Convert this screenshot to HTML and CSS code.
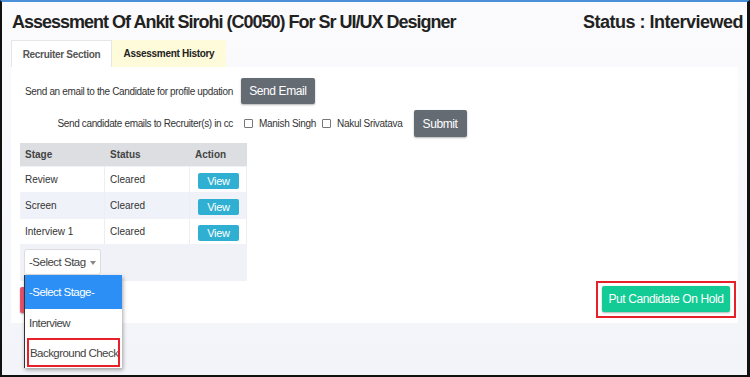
FILE: index.html
```html
<!DOCTYPE html>
<html lang="en">
<head>
  <meta charset="UTF-8" />
  <meta name="viewport" content="width=device-width, initial-scale=1" />
  <title>Assessment</title>
  <link rel="stylesheet" href="styles.css">
</head>
<body>

  <div class="frame">
    <div class="page-head">
      <h1>Assessment Of Ankit Sirohi (C0050) For Sr UI/UX Designer</h1>
      <div class="status">Status : Interviewed</div>
    </div>

    <div class="tabs">
      <div class="tab active">Recruiter Section</div>
      <div class="tab history">Assessment History</div>
    </div>

    <div class="panel">
      <div class="email-row">
        <span class="label">Send an email to the Candidate for profile updation</span>
        <button class="btn">Send Email</button>
      </div>

      <div class="cc-row">
        <span class="label cc-label">Send candidate emails to Recruiter(s) in cc</span>
        <label class="check"><span class="box"></span>Manish Singh</label>
        <label class="check"><span class="box"></span>Nakul Srivatava</label>
        <button class="btn">Submit</button>
      </div>

      <div class="stage-table">
        <div class="row head">
          <div class="cell">Stage</div>
          <div class="cell">Status</div>
          <div class="cell">Action</div>
        </div>
        <div class="row">
          <div class="cell">Review</div>
          <div class="cell">Cleared</div>
          <div class="cell"><span class="view">View</span></div>
        </div>
        <div class="row alt">
          <div class="cell">Screen</div>
          <div class="cell">Cleared</div>
          <div class="cell"><span class="view">View</span></div>
        </div>
        <div class="row">
          <div class="cell">Interview 1</div>
          <div class="cell">Cleared</div>
          <div class="cell"><span class="view">View</span></div>
        </div>
        <div class="select-row">
          <div class="select">
            <span class="select-text">-Select Stag</span>
            <span class="caret"></span>
            <ul class="dropdown">
              <li class="selected">-Select Stage-</li>
              <li>Interview</li>
              <li class="marked">Background Check</li>
            </ul>
          </div>
        </div>
      </div>

      <div class="actions">
        <button class="btn reject" aria-label="Reject"></button>
        <div class="hold-mark">
          <button class="btn hold">Put Candidate On Hold</button>
        </div>
      </div>
    </div>
  </div>

</body>
</html>
```

FILE: styles.css
```css
* {
  box-sizing: border-box;
}

body {
  margin: 0;
  font-family: "Liberation Sans", Arial, sans-serif;
  color: #333;
}

.frame {
  width: 750px;
  height: 377px;
  border-top: 2px solid #4a90d9;
  border-left: 2px solid #111;
  border-right: 3px solid #111;
  border-bottom: 2px solid #111;
  background: linear-gradient(#fbfbfd, #f3f4f9);
  padding: 0 6px 0 9px;
  overflow: hidden;
}

.page-head {
  display: flex;
  justify-content: space-between;
  align-items: baseline;
  height: 38px;
  padding: 10px 0 0 1px;
}

.page-head h1 {
  margin: 0;
  font-size: 18px;
  letter-spacing: -1px;
  font-weight: bold;
  color: #222;
}

.status {
  font-size: 18px;
  letter-spacing: -0.5px;
  font-weight: bold;
  color: #222;
  margin-right: -2px;
}

.tabs {
  display: flex;
  height: 27px;
}

.tab {
  font-size: 10px;
  font-weight: bold;
  letter-spacing: -0.3px;
  line-height: 27px;
  text-align: center;
  white-space: nowrap;
  color: #444;
}

.tab.active {
  width: 101px;
  background: #fff;
  border: 1px solid #e6e6e6;
  border-bottom: none;
  color: #555;
}

.tab.history {
  width: 114px;
  background: #fdfbd9;
  color: #222;
}

.panel {
  width: 727px;
  height: 256px;
  background: #fff;
  padding: 11px 9px 0;
}

.label {
  font-size: 10px;
  letter-spacing: -0.35px;
  color: #333;
  white-space: nowrap;
}

.btn {
  border: none;
  border-radius: 2px;
  background: #646b73;
  color: #fff;
  font-family: "Liberation Sans", Arial, sans-serif;
  font-size: 12px;
  letter-spacing: -0.4px;
  height: 26px;
  padding: 0;
  white-space: nowrap;
  box-shadow: 0 1px 2px rgba(0, 0, 0, 0.3);
}

.email-row {
  display: flex;
  align-items: center;
  gap: 8px;
  padding-left: 5px;
}

.email-row .btn {
  width: 74px;
}

.cc-row {
  display: flex;
  align-items: center;
  margin-top: 6px;
  height: 27px;
}

.cc-label {
  width: 213px;
  text-align: right;
}

.check {
  display: flex;
  align-items: center;
  font-size: 10px;
  letter-spacing: -0.3px;
  color: #333;
  margin-left: 11px;
  white-space: nowrap;
}

.check + .check {
  margin-left: 6px;
}

.check .box {
  width: 9px;
  height: 9px;
  border: 1px solid #777;
  border-radius: 1px;
  margin-right: 6px;
}

.cc-row .btn {
  width: 53px;
  margin-left: 11px;
  height: 27px;
}

.stage-table {
  width: 227px;
  margin-top: 6px;
  background: #f0f2f8;
  font-size: 10px;
}

.row {
  display: grid;
  grid-template-columns: 85px 85px 57px;
  height: 26px;
  background: #fff;
  border-bottom: 1px solid #f0f2f8;
}

.row.head {
  height: 24px;
  background: #dddee2;
  font-weight: bold;
  color: #444;
}

.row.alt {
  background: #eff2f8;
}

.cell {
  display: flex;
  align-items: center;
  padding-left: 5px;
  border-right: 1px solid #eceef3;
}

.row.head .cell {
  border-right: none;
}

.view {
  display: inline-block;
  width: 41px;
  height: 16px;
  margin-left: 3px;
  margin-top: 2px;
  background: #2fb0d3;
  color: #fff;
  font-size: 11px;
  letter-spacing: -0.3px;
  line-height: 16px;
  text-align: center;
  border-radius: 2px;
}

.select-row {
  height: 36px;
  padding: 4px 0 0 4px;
}

.select {
  position: relative;
  width: 77px;
  height: 26px;
  background: #fff;
  border: 1px solid #ddd;
  border-radius: 3px;
  color: #444;
  line-height: 24px;
  padding-left: 4px;
  white-space: nowrap;
}

.select-text {
  font-size: 11.5px;
  letter-spacing: -0.5px;
}

.caret {
  position: absolute;
  right: 4px;
  top: 11px;
  border-left: 3.5px solid transparent;
  border-right: 3.5px solid transparent;
  border-top: 4px solid #888;
}

.dropdown {
  position: absolute;
  top: 25px;
  left: -1px;
  width: 98px;
  margin: 0;
  padding: 0;
  list-style: none;
  background: #fff;
  border-left: 1px solid #333;
  box-shadow: 1px 2px 4px rgba(0, 0, 0, 0.35);
  z-index: 2;
}

.dropdown li {
  height: 29px;
  line-height: 29px;
  font-size: 11.5px;
  letter-spacing: -0.55px;
  padding-left: 4px;
  color: #444;
  white-space: nowrap;
}

.dropdown li.selected {
  height: 34px;
  line-height: 34px;
  background: #2b8ff5;
  color: #fff;
}

.dropdown li.marked {
  margin: 0 2px 1px 2px;
  padding-left: 1px;
  height: 29px;
  line-height: 27px;
  border: 2px solid #e8202a;
  overflow: hidden;
}

.actions {
  display: flex;
  justify-content: space-between;
  align-items: center;
}

.reject {
  background: #e8506c;
  width: 90px;
}

.hold-mark {
  padding: 3px 4px 4px;
  border: 2px solid #e8202a;
  margin-right: -7px;
}

.btn.hold {
  background: #13cb95;
  width: 128px;
  font-size: 12px;
  letter-spacing: -0.4px;
}
```
